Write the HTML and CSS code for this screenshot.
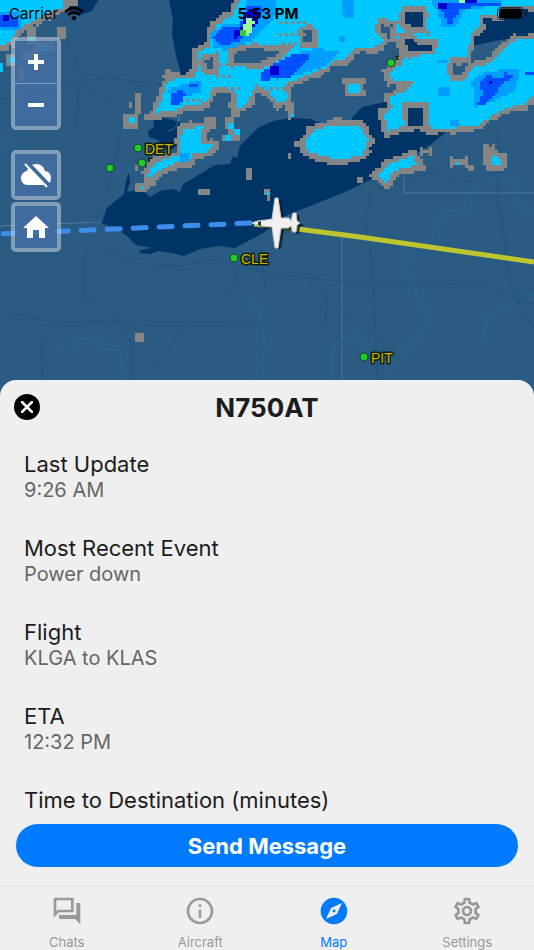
FILE: index.html
```html
<!DOCTYPE html>
<html lang="en">
<head>
    <meta charset="UTF-8">
    <meta name="viewport" content="width=device-width, initial-scale=1.0">
    <title>Flight Map</title>
    <link rel="stylesheet" href="styles.css">
</head>
<body>
    <main class="map">
        <svg class="map-canvas" viewBox="0 0 534 400" preserveAspectRatio="xMidYMin slice" aria-hidden="true">
            <!-- Lakes -->
            <g class="water">
                <path d="M70 0H98L92 11L80 15L68 14Z"/>
                <path d="M169 0L173 20L172 34L176 55L182 78L200 72L200 50L245 20V0Z"/>
                <path d="M400 30L404 48L411 53L440 52L472 46L490 42L500 40L534 37V0H400Z"/>
                <path d="M153 120L159 117L168 119L180 122L185 135L178 145L168 152L158 140L149 137L148 131L154 127Z"/>
                <path d="M102 222L107 208L118 199L124 194L126 180L129 173L130 182L127 192L137 190L141 189L150 197L160 191L172 189L180 192L183 184L200 174L215 165L230 164L233 156L237 158L240 146L258 128L273 121L290 118L310 119L326 125L347 127L352 118L362 107L385 102L430 102L445 133L430 145L400 164L370 180L345 192L320 202L300 210L280 218L265 232L248 241L235 248L218 246L200 249L184 256L172 253L158 251L151 254L139 253L140 250L152 248L136 245L128 237L118 229L103 224Z"/>
            </g>
            <path class="coast" d="M180 108C180 122 176 130 168 131M0 226L100 222M342 232V400M404 173V193H534"/>
            <path class="river" d="M3 135L8 146L14 143L20 152M62 345L70 350L77 337L100 344L107 349L120 350L125 380M404 193M501 174L490 178L473 186L471 207L457 211L445 212L433 235L432 244M401 259L413 250M432 244L414 254L401 270L415 286L418 301L429 315L424 330L402 353L390 370M252 300L262 320L265 350L255 378M490 176L515 184L519 205L534 216M484 344L486 316L510 305L520 296L534 295M333 400L333 345L345 340L362 334L367 350"/>
            <path class="road" d="M64 35L75 55L77 70L83 74L78 95L76 130M83 80L112 78L145 83L180 86M0 100L80 84L100 97L132 115M85 250L85 297L55 322L43 345L42 380M0 311L55 323L125 320L155 326L190 326L262 325M85 297L119 318L122 330L132 344V380M262 250L265 290M238 265L236 285L185 327L148 375M105 250L140 264L180 266L215 259L270 274L304 277L350 283L440 283L484 286L534 305M304 277L328 300L378 338L410 370M370 250L374 290L377 380M504 250L515 297L534 330M328 290L325 325L345 345M120 135L108 190L88 240M370 250L366 220L372 190L430 173L475 182L510 168M499 130L497 190L506 250M354 20L402 60M354 100L400 88"/>

            <!-- Rain covers the labels of the airports under it -->
            <g class="airport">
                <text x="149" y="169">YIP</text>
                <text x="397" y="67">YYZ</text>
            </g>
            <g id="radar" shape-rendering="crispEdges"></g>
            <g class="airport">
                <text x="145" y="154">DET</text>
                <text x="241" y="264">CLE</text>
                <text x="371" y="363">PIT</text>
            </g>
            <g class="airport-dot">
                <circle cx="138" cy="148" r="4"/>
                <circle cx="142" cy="163" r="4"/>
                <circle cx="110" cy="168" r="4"/>
                <circle cx="391" cy="63" r="4"/>
                <circle cx="234" cy="258" r="4"/>
                <circle cx="364" cy="357" r="4"/>
            </g>

            <!-- Route and aircraft -->
            <path class="route-ahead" d="M250 223L0 234"/>
            <path class="route-flown" d="M254 224L290 228L360 237L534 262"/>
            <g class="plane-shadow" transform="translate(3 2)">
                <path d="M253 223L262 220L272 219L275 198H278L281 218L286 218L291 221L293 213H296L297 221L301 223L297 225L296 232H293L292 226L286 229L281 228L278 247H275L272 228L262 226Z"/>
            </g>
            <path class="plane" d="M252 223Q258 220 266 220L272 219L275 198H278L281 218L289 218L291 221L293 213H296L297 221L300 223L297 225L296 232H293L291 226L288 228L281 228L278 248H275L272 227L262 226Q256 225 252 223Z"/>
            <path class="cockpit" d="M258 222L261 221V226L258 225Z"/>
        </svg>

        <div class="status-bar">
            <div class="carrier">
                <span>Carrier</span>
                <svg width="20" height="15" viewBox="0 0 20 15" aria-hidden="true">
                    <path d="M1 6Q10 -2 19 6M4 9Q10 4 16 9" fill="none" stroke="#000" stroke-width="2.4"/>
                    <path d="M7 11.5Q10 9 13 11.5L10 15Z"/>
                </svg>
            </div>
            <span class="time">5:53 PM</span>
            <svg class="battery" width="30" height="14" viewBox="0 0 30 14" aria-hidden="true">
                <rect x=".5" y=".5" width="26" height="12" rx="3" fill="none" stroke="#063450"/>
                <rect x="2" y="1.5" width="23" height="10" rx="2"/>
                <path d="M29 5V9" stroke="#001a35" stroke-width="2"/>
            </svg>
        </div>

        <div class="controls">
            <div class="control-group">
                <button type="button" aria-label="Zoom in">
                    <svg width="18" height="18" viewBox="0 0 18 18"><path d="M9 1V17M1 9H17" stroke="#fff" stroke-width="4"/></svg>
                </button>
                <button type="button" aria-label="Zoom out">
                    <svg width="18" height="18" viewBox="0 0 18 18"><path d="M1 9H17" stroke="#fff" stroke-width="4"/></svg>
                </button>
            </div>
            <div class="control-group weather">
                <button type="button" aria-label="Hide weather">
                    <svg width="32" height="26" viewBox="0 0 32 26">
                        <path fill="#fff" d="M8 23A7 7 0 0 1 3 11Q5 9 7 9Q9 2 16 2Q23 2 25 9Q31 10 31 16Q31 23 24 23Z"/>
                        <path d="M7 1L29 24" stroke="#3f6a9c" stroke-width="5"/>
                        <path d="M5 2L27 25" stroke="#fff" stroke-width="2"/>
                    </svg>
                </button>
            </div>
            <div class="control-group">
                <button type="button" aria-label="Home">
                    <svg width="26" height="24" viewBox="0 0 26 24"><path fill="#fff" d="M13 1L26 13H22V23H16V15H10V23H4V13H0Z"/></svg>
                </button>
            </div>
        </div>
    </main>

    <section class="sheet">
        <header class="sheet-header">
            <button type="button" class="close" aria-label="Close">
                <svg width="12" height="12" viewBox="0 0 12 12"><path d="M1 1L11 11M11 1L1 11" stroke="#fff" stroke-width="2.5" stroke-linecap="round"/></svg>
            </button>
            <h1>N750AT</h1>
        </header>
        <dl class="details">
            <div><dt>Last Update</dt><dd>9:26 AM</dd></div>
            <div><dt>Most Recent Event</dt><dd>Power down</dd></div>
            <div><dt>Flight</dt><dd>KLGA to KLAS</dd></div>
            <div><dt>ETA</dt><dd>12:32 PM</dd></div>
            <div><dt>Time to Destination (minutes)</dt></div>
        </dl>
        <button type="button" class="send">Send Message</button>
    </section>

    <nav class="tabs">
        <a href="#chats">
            <svg viewBox="0 0 24 24"><path d="M15 4v7H5.17L4 12.17V4h11m1-2H3c-.55 0-1 .45-1 1v14l4-4h10c.55 0 1-.45 1-1V3c0-.55-.45-1-1-1zm5 4h-2v9H6v2c0 .55.45 1 1 1h11l4 4V7c0-.55-.45-1-1-1z"/></svg>
            <span>Chats</span>
        </a>
        <a href="#aircraft">
            <svg viewBox="0 0 24 24"><path d="M11 7h2v2h-2zm0 4h2v6h-2zm1-9C6.48 2 2 6.48 2 12s4.48 10 10 10 10-4.48 10-10S17.52 2 12 2zm0 18c-4.41 0-8-3.59-8-8s3.59-8 8-8 8 3.59 8 8-3.59 8-8 8z"/></svg>
            <span>Aircraft</span>
        </a>
        <a href="#map" class="active">
            <svg viewBox="0 0 24 24"><path d="M12 10.9c-.61 0-1.1.49-1.1 1.1s.49 1.1 1.1 1.1c.61 0 1.1-.49 1.1-1.1s-.49-1.1-1.1-1.1zM12 2C6.48 2 2 6.48 2 12s4.48 10 10 10 10-4.48 10-10S17.52 2 12 2zm2.19 12.19L6 18l3.81-8.19L18 6l-3.81 8.19z"/></svg>
            <span>Map</span>
        </a>
        <a href="#settings">
            <svg viewBox="0 0 24 24"><path d="M19.43 12.98c.04-.32.07-.64.07-.98 0-.34-.03-.66-.07-.98l2.11-1.65c.19-.15.24-.42.12-.64l-2-3.46c-.09-.16-.26-.25-.44-.25-.06 0-.12.01-.17.03l-2.49 1c-.52-.4-1.08-.73-1.69-.98l-.38-2.65C14.46 2.18 14.25 2 14 2h-4c-.25 0-.46.18-.49.42l-.38 2.65c-.61.25-1.17.59-1.69.98l-2.49-1c-.06-.02-.12-.03-.18-.03-.17 0-.34.09-.43.25l-2 3.46c-.13.22-.07.49.12.64l2.11 1.65c-.04.32-.07.65-.07.98 0 .33.03.66.07.98l-2.11 1.65c-.19.15-.24.42-.12.64l2 3.46c.09.16.26.25.44.25.06 0 .12-.01.17-.03l2.49-1c.52.4 1.08.73 1.69.98l.38 2.65c.03.24.24.42.49.42h4c.25 0 .46-.18.49-.42l.38-2.65c.61-.25 1.17-.59 1.69-.98l2.49 1c.06.02.12.03.18.03.17 0 .34-.09.43-.25l2-3.46c.12-.22.07-.49-.12-.64l-2.11-1.65zm-1.98-1.71c.04.31.05.52.05.73 0 .21-.02.43-.05.73l-.14 1.13.89.7 1.08.84-.7 1.21-1.27-.51-1.04-.42-.9.68c-.43.32-.84.56-1.25.73l-1.06.43-.16 1.13-.2 1.35h-1.4l-.19-1.35-.16-1.13-1.06-.43c-.43-.18-.83-.41-1.23-.71l-.91-.7-1.06.43-1.27.51-.7-1.21 1.08-.84.89-.7-.14-1.13c-.03-.31-.05-.54-.05-.74s.02-.43.05-.73l.14-1.13-.89-.7-1.08-.84.7-1.21 1.27.51 1.04.42.9-.68c.43-.32.84-.56 1.25-.73l1.06-.43.16-1.13.2-1.35h1.39l.19 1.35.16 1.13 1.06.43c.43.18.83.41 1.23.71l.91.7 1.06-.43 1.27-.51.7 1.21-1.07.85-.89.7.14 1.13zM12 8c-2.21 0-4 1.79-4 4s1.79 4 4 4 4-1.79 4-4-1.79-4-4-4zm0 6c-1.1 0-2-.9-2-2s.9-2 2-2 2 .9 2 2-.9 2-2 2z"/></svg>
            <span>Settings</span>
        </a>
    </nav>

    <script src="radar.js"></script>
</body>
</html>
```
FILE: styles.css
```css
/* Global styles */
* {
    box-sizing: border-box;
}

body {
    font-family: Inter, "Liberation Sans", sans-serif;
    margin: 0;
    height: 100vh;
    display: flex;
    flex-direction: column;
    background-color: #efefef;
    color: #1c1c1c;
    overflow: hidden;
}

button {
    font-family: inherit;
    border: none;
    padding: 0;
    cursor: pointer;
}

/* Map */
.map {
    position: relative;
    flex: 0 0 calc(40vh + 20px);
    overflow: hidden;
    background-color: #295b83;
}

.map-canvas {
    display: block;
    width: 100%;
    height: 100%;
}

.water {
    fill: #003366;
}

.coast,
.river,
.road {
    fill: none;
    stroke-linejoin: round;
}

.coast {
    stroke: #7ba5bc;
    stroke-opacity: 0.45;
}

.river {
    stroke: #216c9b;
    stroke-opacity: 0.7;
}

.road {
    stroke: #234f74;
    stroke-opacity: 0.7;
}

.airport {
    font-family: "Liberation Sans", sans-serif;
    font-size: 14px;
    fill: #c4bb00;
    stroke: #151a08;
    stroke-width: 3px;
    stroke-linejoin: round;
    paint-order: stroke;
}

.airport-dot {
    fill: #22cc22;
    stroke: #12482c;
}

.route-ahead {
    fill: none;
    stroke: #3d8eea;
    stroke-width: 5px;
    stroke-linecap: round;
    stroke-dasharray: 13 13;
}

.route-flown {
    fill: none;
    stroke: #bdc62e;
    stroke-width: 5px;
}

.plane {
    fill: #f0f0f0;
    stroke: #c4c8cc;
    stroke-width: 1px;
}

.plane-shadow {
    fill: #101c28;
    opacity: 0.8;
}

.cockpit {
    fill: #333;
}

/* Status bar over the map */
.status-bar {
    position: absolute;
    top: 0;
    left: 0;
    right: 0;
    display: grid;
    grid-template-columns: 1fr auto 1fr;
    align-items: center;
    height: 27px;
    padding: 0 7px 0 9px;
    font-size: 15px;
    color: #000;
}

.carrier {
    display: flex;
    align-items: center;
    gap: 6px;
}

.time {
    font-weight: 700;
}

.battery {
    justify-self: end;
}

/* Map buttons */
.controls {
    position: absolute;
    top: 37px;
    left: 11px;
    display: flex;
    flex-direction: column;
    gap: 2px;
}

.control-group {
    width: 50px;
    border: 4px solid rgba(190, 205, 218, 0.6);
    border-radius: 5px;
    background-clip: padding-box;
}

.control-group button {
    display: flex;
    align-items: center;
    justify-content: center;
    width: 100%;
    height: 42px;
    background-color: rgba(68, 110, 163, 0.85);
}

.control-group button + button {
    border-top: 1px solid #7e9fbd;
    height: 43px;
}

.weather {
    margin-top: 18px;
}

/* Details sheet */
.sheet {
    position: relative;
    flex: 1;
    min-height: 0;
    margin-top: -20px;
    display: flex;
    flex-direction: column;
    background-color: #efefef;
    border-radius: 16px 16px 0 0;
}

.sheet-header {
    display: grid;
    grid-template-columns: 26px 1fr 26px;
    align-items: center;
    height: 54px;
    padding: 0 14px;
    flex-shrink: 0;
}

.sheet-header h1 {
    margin: 0;
    text-align: center;
    font-size: 26px;
    font-weight: 700;
}

.close {
    display: flex;
    align-items: center;
    justify-content: center;
    width: 26px;
    height: 26px;
    border-radius: 50%;
    background-color: #000;
}

.details {
    flex: 1;
    min-height: 0;
    margin: 0;
    padding: 16px 24px 0;
    overflow: hidden;
}

.details div {
    height: 84px;
}

.details dt {
    font-size: 22px;
    line-height: 28px;
}

.details dd {
    margin: 0;
    font-size: 20px;
    line-height: 24px;
    color: #666;
}

.send {
    flex-shrink: 0;
    height: 43px;
    margin: 0 16px 19px;
    border-radius: 22px;
    background-color: #007aff;
    color: #fff;
    font-size: 22px;
    font-weight: 700;
}

/* Bottom tabs */
.tabs {
    flex: 0 0 64px;
    display: grid;
    grid-template-columns: repeat(4, 1fr);
    border-top: 1px solid #e0e0e0;
}

.tabs a {
    display: flex;
    flex-direction: column;
    align-items: center;
    gap: 7px;
    padding-top: 8px;
    color: #999;
    font-size: 13px;
    line-height: 16px;
    text-decoration: none;
}

.tabs svg {
    width: 32px;
    height: 32px;
    fill: currentColor;
}

.tabs .active {
    color: #007aff;
}
```
FILE: radar.js
```javascript
// Rain areas, snapped to a 3px grid. Later levels paint over earlier ones.
const CELL = 3;

const rain = [
    "M0 0H63V7L52 11L42 17L28 23L15 29L12 40L0 47Z",
    "M240 0H534V6H500V14H480V24L471 34L469 48L466 58L450 58L446 68L450 80L465 80L472 68L492 63L502 50L516 40H534V96L522 105L505 108L490 117L478 125L450 128H430V120L424 108L405 104V126L388 131L384 114L392 108L390 97L408 90L414 82L392 80L390 72L402 64L408 54L403 42L396 38L398 20L378 19L374 30L384 40L380 46L356 48L345 60L333 60L325 68L300 78L284 84L288 100L278 103L268 90L256 84L246 104L236 110L236 92L228 88H213L206 103L184 106L172 111L156 113L165 90L168 80L193 78L198 68V52L208 48L216 26L233 15Z",
    "M182 130L203 126L200 142L212 145L207 152L192 154L190 160L176 162L154 174L150 180L148 174L156 162L180 155Z",
    "M306 142L312 132L333 125L360 126L368 140L362 155L340 160L312 153L306 148Z",
    "M378 176L388 164L412 156L418 165L396 170L386 182Z",
    "M349 84H360V92H349Z",
    "M492 154L502 159V165H492Z"
];

// Small cells of rain with no rim of their own
const drops = "M228 122H234V129H228ZM234 129H239V136H234ZM226 136H231V140H226ZM128 118H136V123H128ZM140 185H143V188H140ZM0 64H3V72H0ZM9 57H14V62H9ZM30 37H34V41H30ZM42 45H48V50H42ZM267 192H270V196H267ZM456 161H460V166H456ZM291 114H294V118H291Z";

// Light echo that is not the rim of a rain area
const light = "M63 0H77V5H63ZM57 28H65V39H57ZM27 28H37V44H27ZM135 93H142V113H135ZM128 101H133V108H128ZM122 115H138V128H122ZM145 114H150V120H145ZM164 68H170V76H164ZM285 104H295V114H291V120H287V111H285ZM264 188H270V202H268V195H264ZM247 168H253V180H247ZM198 188H210V196H198ZM134 183H147V192H134ZM134 165H139V172H134ZM287 154H292V160H287ZM293 141H299V147H293ZM421 146H424V149H429V146H432V155H429V152H424V155H421ZM449 157H452V160H464V157H467V168H464V165H452V168H449ZM469 165H475V172H469ZM484 145H487V148H493V145H496V153H508V168H490V165H484ZM358 177H363V184H358ZM134 333H145V341H134ZM21 51H36V60H21ZM34 41H53V51H34ZM17 67H24V80H17ZM6 55H15V65H6ZM225 116H234V136H239V142H223V136H228V129H225ZM207 118H217V129H207Z";

const holes = [
    "M233 54L246 49L282 50L274 56L260 62H235Z",
    "M405 12H422V28H412L409 23H405Z",
    "M405 40H413L418 44H431V51H415L408 52Z",
    "M408 107H424V126H408Z",
    "M205 60L213 58V68H206ZM304 30H311V42H304Z"
];

const mild = "M245 0L276 0L274 18L262 32L250 42L226 50L213 48L211 34L223 24L244 23ZM342 0H354V18H344ZM430 0H500V5L464 10L456 28L442 26L438 12ZM275 66L290 56L316 48L340 52L326 66L300 74L276 80ZM168 90L190 82H202V92L186 96L174 104ZM472 80L486 72L520 68L516 90L496 100L474 107ZM438 86H449V96H438ZM450 120H459V126H450ZM0 12H22V31H0ZM179 154H190V162H179ZM340 36H345V43H340ZM438 60H446V64H438Z";

const heavy = "M246 6L264 8L256 26L238 42L220 46L213 36L222 28L240 27ZM437 2H500V6L462 8L450 26L444 14ZM262 72L278 62L300 52L311 57L301 66L288 78L262 80ZM170 94L181 90L186 94L180 104H170ZM189 84H199V88H189ZM480 82L487 76L502 78L506 72L514 77L502 84L494 95L484 105L478 104L482 94ZM524 72H534V76H524ZM0 14H13V18H18V28H0Z";

const severe = "M252 7L260 12L258 24L248 31L235 38L234 31L242 27L244 18ZM439 3H446V10H439ZM459 0H476V4H459ZM270 67H278V75H270ZM488 81H491V84H488ZM3 15H9V20H3Z";

const core = "M247 17L254 22L251 34L246 37L243 30ZM458 0H464V3H458Z";
const coreEdge = "M240 29H245V37H240Z";

// Rows of single light cells, every second column: [x, y, count]
const specks = [
    [279, 21, 5], [279, 33, 5], [282, 42, 4], [219, 63, 3], [216, 75, 3],
    [186, 99, 3], [270, 87, 4], [231, 87, 2]
];

const ctx = document.createElement("canvas").getContext("2d");
const rainPaths = rain.map(d => new Path2D(d));
const holePaths = holes.map(d => new Path2D(d));
const lightPath = new Path2D(light);
const levels = [
    ["#00c8ff", new Path2D(drops)],
    ["#009fff", new Path2D(mild)],
    ["#0050ff", new Path2D(heavy)],
    ["#0000cc", new Path2D(severe)],
    ["#99ff99", new Path2D(core)],
    ["#33cc33", new Path2D(coreEdge)]
];

function noise(col, row) {
    const n = Math.sin(col * 12.9898 + row * 78.233) * 43758.5453;
    return n - Math.floor(n);
}

function isSpeck(x, y) {
    return specks.some(([sx, sy, count]) =>
        y === sy && x >= sx && x < sx + count * 6 && (x - sx) % 6 === 0);
}

function colorAt(x, y, col, row) {
    let color = null;
    // rim blocks are two cells wide
    ctx.lineWidth = 8 + noise(col >> 1, row >> 1) * 6;
    if (ctx.isPointInPath(lightPath, x, y)) color = "#858585";
    if (rainPaths.some(p => ctx.isPointInStroke(p, x, y))) color = "#858585";
    if (rainPaths.some(p => ctx.isPointInPath(p, x, y))) color = "#00c8ff";
    if (holePaths.some(p => ctx.isPointInStroke(p, x, y))) color = "#858585";
    if (holePaths.some(p => ctx.isPointInPath(p, x, y))) color = null;
    levels.forEach(([fill, path]) => {
        if (ctx.isPointInPath(path, x, y)) color = fill;
    });
    if (isSpeck(col * CELL, row * CELL)) color = "#858585";
    return color;
}

function drawRadar() {
    const shapes = {};
    for (let row = 0; row < 115; row++) {
        for (let col = 0; col < 178; col++) {
            const x = col * CELL;
            const y = row * CELL;
            const color = colorAt(x + 1.5, y + 1.5, col, row);
            if (color) {
                shapes[color] = (shapes[color] || "") + `M${x} ${y}h${CELL}v${CELL}h-${CELL}z`;
            }
        }
    }
    const group = document.getElementById("radar");
    for (const color in shapes) {
        const path = document.createElementNS("http://www.w3.org/2000/svg", "path");
        path.setAttribute("fill", color);
        path.setAttribute("d", shapes[color]);
        group.appendChild(path);
    }
}

drawRadar();
```
